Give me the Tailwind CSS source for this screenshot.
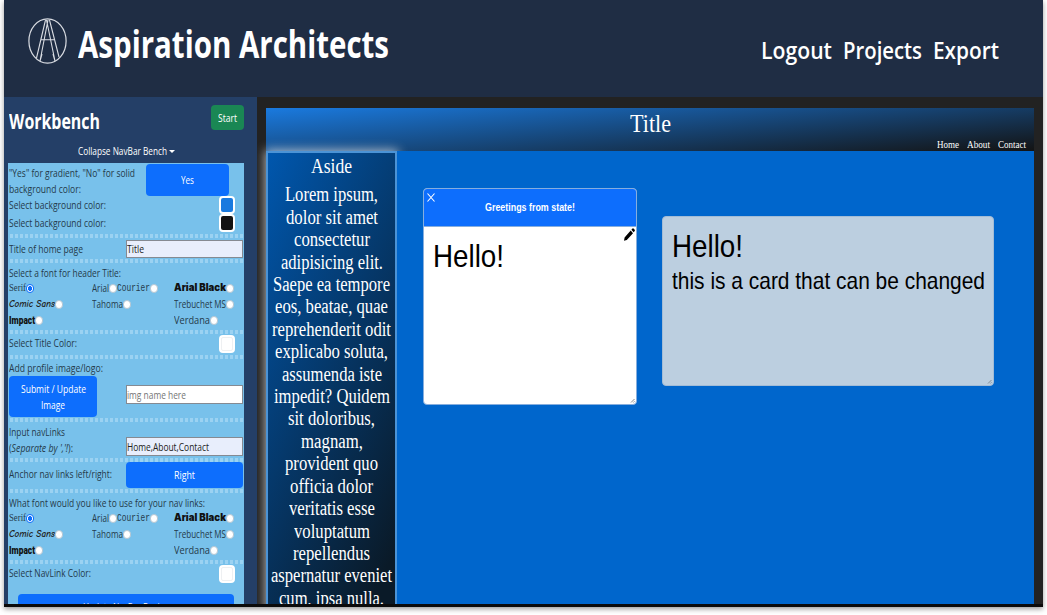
<!DOCTYPE html>
<html lang="en">
<head>
<meta charset="utf-8">
<title>Aspiration Architects</title>
<script src="https://cdn.jsdelivr.net/npm/@tailwindcss/browser@4"></script>
</head>
<body class="bg-white overflow-hidden h-[615px] font-['Open_Sans',sans-serif]">
<div class="ml-[4px] w-[1039px] h-[607px] flex flex-col overflow-hidden shadow-[0_2px_5px_rgba(0,0,0,0.4)] bg-[#0b0b0b]">
  <header class="h-[97px] shrink-0 bg-[#1f2d44] text-white flex items-start pl-[24px] pr-[44px]">
    <svg class="mt-[18px] w-[39px] h-[46px] shrink-0" viewBox="0 0 39 46" fill="none" stroke="#d9dce2" stroke-width="1.2">
      <ellipse cx="19.5" cy="23" rx="18.6" ry="22.2"/>
      <path d="M17.500 2 L8.500 40 M20 2 L12 43 M18.500 2 L27 43 M21.500 2 L31 39 M13 21.700 H26 M12 43 L14 36 M27 43 L25 36" stroke-width="1.100"/>
    </svg>
    <h1 class="ml-[11px] mt-[20px] leading-[48px] text-[37.500px] font-bold"><span data-w="311">Aspiration Architects</span></h1>
    <nav class="ml-auto mt-[34px] flex gap-[11px] leading-[32px] text-[24px] font-semibold">
      <span data-w="71">Logout</span><span data-w="79">Projects</span><span data-w="66">Export</span>
    </nav>
  </header>

  <div class="h-[507px] shrink-0 flex overflow-hidden">
    <aside class="w-[253px] shrink-0 bg-[#243f67] pl-[4px] overflow-hidden text-[10.500px] leading-[16px] text-[#243a4a]">
      <div class="h-[47px] w-[236px] flex justify-between text-white pt-[8px]">
        <h2 class="leading-[33px] text-[21px] font-bold pl-[1px]"><span data-w="91">Workbench</span></h2>
        <button class="w-[33px] h-[25px] rounded-[4px] bg-[#1a8754] flex items-center justify-center"><span data-w="19">Start</span></button>
      </div>
      <div class="h-[19px] flex items-start pt-0 pl-[70px] text-white leading-[15px]">
        <span data-w="89">Collapse NavBar Bench</span>
        <i class="ml-[2px] mt-[6px] border-x-[3px] border-x-transparent border-t-[3px] border-t-white"></i>
      </div>

      <div class="w-[236px] h-[460px] bg-[#78c1eb]">
        <div class="h-[71px] flex pl-[1px]">
          <div class="w-[137px] pt-[2px]">
            <div class="h-[16px]"><span data-w="126">"Yes" for gradient, "No" for solid</span></div>
            <div class="h-[16px]"><span data-w="72">background color:</span></div>
            <div class="h-[18px]"><span data-w="97">Select background color:</span></div>
            <div><span data-w="97">Select background color:</span></div>
          </div>
          <div class="w-[90px] flex flex-col items-end pt-[1px]">
            <button class="w-[83px] h-[32px] mr-[7px] rounded-[4px] bg-[#0d6efd] text-white flex items-center justify-center"><span data-w="13">Yes</span></button>
            <i class="w-[16px] h-[18px] mr-px rounded-[4px] border-2 border-white bg-[#1a7adf]"></i>
            <i class="w-[16px] h-[18px] mr-px rounded-[4px] border-2 border-white bg-[#131313]"></i>
          </div>
        </div>
        <hr class="border-0 h-[4px] bg-[repeating-linear-gradient(90deg,transparent_0_2px,#9bd2f2_2px_5px)]">
        <div class="h-[21px] flex pl-[1px] pt-[2px]">
          <div class="w-[117px] pt-px"><span data-w="74">Title of home page</span></div>
          <div class="w-[117px] h-[18px] bg-[#e8eefc] border border-[#858a92] leading-[16px] text-[#222]"><span data-w="17">Title</span></div>
        </div>
        <hr class="border-0 h-[4px] bg-[repeating-linear-gradient(90deg,transparent_0_2px,#9bd2f2_2px_5px)]">
        <div class="h-[67px] pl-[1px] pt-[2px]">
          <div class="h-[16px]"><span data-w="112">Select a font for header Title:</span></div>
          <div class="grid grid-cols-[83px_82px_70px] auto-rows-[16px] -mt-px">
            <div class="flex items-center"><span data-w="17" class="font-['Liberation_Serif',serif]">Serif</span><i class="w-[8px] h-[9px] rounded-full border border-[#0d6efd] bg-[radial-gradient(#0d6efd_45%,#fff_55%)]"></i></div>
            <div class="flex items-center"><span data-w="17" class="text-[11px]">Arial</span><i class="w-[8px] h-[9px] rounded-full bg-white border border-[#b5c6d2]"></i><span data-w="33" class="font-['Liberation_Mono',monospace] text-[11px]">Courier</span><i class="w-[8px] h-[9px] rounded-full bg-white border border-[#b5c6d2]"></i></div>
            <div class="flex items-center"><span data-w="52" class="font-['Inter',sans-serif] font-black text-[#111]">Arial Black</span><i class="w-[8px] h-[9px] rounded-full bg-white border border-[#b5c6d2]"></i></div>
            <div class="flex items-center"><span data-w="46" class="font-['Comic_Sans_MS','Comic_Neue','Noto_Sans',cursive] italic font-semibold text-[#222]">Comic Sans</span><i class="w-[8px] h-[9px] rounded-full bg-white border border-[#b5c6d2]"></i></div>
            <div class="flex items-center"><span data-w="31">Tahoma</span><i class="w-[8px] h-[9px] rounded-full bg-white border border-[#b5c6d2]"></i></div>
            <div class="flex items-center"><span data-w="52">Trebuchet MS</span><i class="w-[8px] h-[9px] rounded-full bg-white border border-[#b5c6d2]"></i></div>
            <div class="flex items-center"><span data-w="26" class="font-['Roboto',sans-serif] font-black text-[11.500px] text-[#111]">Impact</span><i class="w-[8px] h-[9px] rounded-full bg-white border border-[#b5c6d2]"></i></div>
            <div></div>
            <div class="flex items-center"><span data-w="36">Verdana</span><i class="w-[8px] h-[9px] rounded-full bg-white border border-[#b5c6d2]"></i></div>
          </div>
        </div>
        <hr class="border-0 h-[4px] bg-[repeating-linear-gradient(90deg,transparent_0_2px,#9bd2f2_2px_5px)]">
        <div class="h-[21px] flex justify-between pl-[1px] pr-[9px] pt-[1px]">
          <span data-w="68">Select Title Color:</span>
          <i class="w-[16px] h-[18px] rounded-[4px] border-2 border-white bg-white outline-1 -outline-offset-3 outline-[#eef0f2]"></i>
        </div>
        <hr class="border-0 h-[4px] bg-[repeating-linear-gradient(90deg,transparent_0_2px,#9bd2f2_2px_5px)]">
        <div class="h-[59px] pl-[1px] pt-[1px]">
          <div class="h-[16px]"><span data-w="94">Add profile image/logo:</span></div>
          <div class="flex">
            <button class="w-[88px] h-[41px] rounded-[4px] bg-[#0d6efd] text-white flex flex-col items-center justify-center"><span data-w="65">Submit / Update</span><span data-w="24">Image</span></button>
            <div class="ml-[29px] mt-[9px] w-[117px] h-[19px] bg-white border border-[#858a92] leading-[18px] text-[#757575]"><span data-w="59">img name here</span></div>
          </div>
        </div>
        <hr class="border-0 h-[4px] bg-[repeating-linear-gradient(90deg,transparent_0_2px,#9bd2f2_2px_5px)]">
        <div class="h-[36px] flex pl-[1px] pt-[2px]">
          <div class="w-[117px]">
            <div class="h-[16px]"><span data-w="56">Input navLinks</span></div>
            <div><span data-w="64">(<em>Separate by ','!</em>):</span></div>
          </div>
          <div class="mt-[13px] w-[117px] h-[19px] bg-[#e8eefc] border border-[#858a92] leading-[18px] text-[#222]"><span data-w="82">Home,About,Contact</span></div>
        </div>
        <hr class="border-0 h-[4px] bg-[repeating-linear-gradient(90deg,transparent_0_2px,#9bd2f2_2px_5px)]">
        <div class="h-[27px] flex pl-[1px]">
          <div class="w-[117px] pt-[4px]"><span data-w="103">Anchor nav links left/right:</span></div>
          <button class="w-[117px] h-[26px] rounded-[4px] bg-[#0d6efd] text-white flex items-center justify-center"><span data-w="21">Right</span></button>
        </div>
        <hr class="border-0 h-[4px] bg-[repeating-linear-gradient(90deg,transparent_0_2px,#9bd2f2_2px_5px)]">
        <div class="h-[67px] pl-[1px] pt-[2px]">
          <div class="h-[16px]"><span data-w="196">What font would you like to use for your nav links:</span></div>
          <div class="grid grid-cols-[83px_82px_70px] auto-rows-[16px] -mt-px">
            <div class="flex items-center"><span data-w="17" class="font-['Liberation_Serif',serif]">Serif</span><i class="w-[8px] h-[9px] rounded-full border border-[#0d6efd] bg-[radial-gradient(#0d6efd_45%,#fff_55%)]"></i></div>
            <div class="flex items-center"><span data-w="17" class="text-[11px]">Arial</span><i class="w-[8px] h-[9px] rounded-full bg-white border border-[#b5c6d2]"></i><span data-w="33" class="font-['Liberation_Mono',monospace] text-[11px]">Courier</span><i class="w-[8px] h-[9px] rounded-full bg-white border border-[#b5c6d2]"></i></div>
            <div class="flex items-center"><span data-w="52" class="font-['Inter',sans-serif] font-black text-[#111]">Arial Black</span><i class="w-[8px] h-[9px] rounded-full bg-white border border-[#b5c6d2]"></i></div>
            <div class="flex items-center"><span data-w="46" class="font-['Comic_Sans_MS','Comic_Neue','Noto_Sans',cursive] italic font-semibold text-[#222]">Comic Sans</span><i class="w-[8px] h-[9px] rounded-full bg-white border border-[#b5c6d2]"></i></div>
            <div class="flex items-center"><span data-w="31">Tahoma</span><i class="w-[8px] h-[9px] rounded-full bg-white border border-[#b5c6d2]"></i></div>
            <div class="flex items-center"><span data-w="52">Trebuchet MS</span><i class="w-[8px] h-[9px] rounded-full bg-white border border-[#b5c6d2]"></i></div>
            <div class="flex items-center"><span data-w="26" class="font-['Roboto',sans-serif] font-black text-[11.500px] text-[#111]">Impact</span><i class="w-[8px] h-[9px] rounded-full bg-white border border-[#b5c6d2]"></i></div>
            <div></div>
            <div class="flex items-center"><span data-w="36">Verdana</span><i class="w-[8px] h-[9px] rounded-full bg-white border border-[#b5c6d2]"></i></div>
          </div>
        </div>
        <hr class="border-0 h-[4px] bg-[repeating-linear-gradient(90deg,transparent_0_2px,#9bd2f2_2px_5px)]">
        <div class="h-[30px] flex justify-between pl-[1px] pr-[9px] pt-[1px]">
          <span data-w="82">Select NavLink Color:</span>
          <i class="w-[16px] h-[18px] rounded-[4px] border-2 border-white bg-white outline-1 -outline-offset-3 outline-[#eef0f2]"></i>
        </div>
        <button class="ml-[10px] w-[216px] h-[26px] rounded-[4px] bg-[#0d6efd] text-white flex justify-center pt-[5px]"><span data-w="86">Update NavBar Design</span></button>
      </div>
    </aside>

    <main class="flex-1 bg-[#222] pl-[9px] pt-[11px] overflow-hidden">
      <div class="w-[768px] font-['Liberation_Serif',serif] text-white">
        <div class="h-[43px] bg-[linear-gradient(175deg,#1a7adf,#131313)]">
          <div class="h-[30px] pl-[364px] leading-[31px] text-[25px]"><span data-w="41">Title</span></div>
          <nav class="flex justify-end gap-[8px] pr-[8px] text-[10.500px] leading-[13px]">
            <span data-w="22">Home</span><span data-w="23">About</span><span data-w="28">Contact</span>
          </nav>
        </div>
        <div class="flex h-[460px]">
          <section class="relative w-[131px] shrink-0 border-2 border-[#4b93d6] bg-[linear-gradient(115deg,#0057ae,#0a1a28_92%)] shadow-[0_0_10px_1px_rgba(255,255,255,0.65)] text-[20px] leading-[22.400px] flex flex-col items-center">
            <span data-w="41" class="mt-[2px] mb-[6px]">Aside</span>
            <span data-w="93">Lorem ipsum,</span>
            <span data-w="92">dolor sit amet</span>
            <span data-w="76">consectetur</span>
            <span data-w="102">adipisicing elit.</span>
            <span data-w="117">Saepe ea tempore</span>
            <span data-w="113">eos, beatae, quae</span>
            <span data-w="119">reprehenderit odit</span>
            <span data-w="113">explicabo soluta,</span>
            <span data-w="100">assumenda iste</span>
            <span data-w="116">impedit? Quidem</span>
            <span data-w="87">sit doloribus,</span>
            <span data-w="62">magnam,</span>
            <span data-w="93">provident quo</span>
            <span data-w="83">officia dolor</span>
            <span data-w="86">veritatis esse</span>
            <span data-w="76">voluptatum</span>
            <span data-w="77">repellendus</span>
            <span data-w="121">aspernatur eveniet</span>
            <span data-w="105">cum, ipsa nulla.</span>
          </section>
          <section class="relative flex-1 bg-[#0066cc] flex items-start pl-[26px] font-['Liberation_Sans',sans-serif] text-black">
            <article class="mt-[37px] w-[214px] h-[217px] rounded-[4px] border border-[#86aede] bg-white overflow-hidden flex flex-col">
              <div class="h-[38px] shrink-0 bg-[#0d6efd] border-b border-[#86aede] text-white flex pl-[3px]">
                <svg class="mt-[4px] w-[8px] h-[9px]" viewBox="0 0 8 9" stroke="white" stroke-width="1.100"><path d="M.5 .5 L7.500 8.500 M7.500 .5 L.5 8.500"/></svg>
                <span data-w="90" class="ml-[50px] text-[11px] font-bold leading-[37px]">Greetings from state!</span>
              </div>
              <div class="flex-1 flex justify-between pl-[9px] pr-[1px]">
                <span data-w="71" class="mt-[9px] text-[32px] leading-[40px]">Hello!</span>
                <svg class="mt-[1px] w-[11px] h-[13px]" viewBox="0 0 11 13"><path d="M0 12.700 L.6 9.600 L6.700 2.600 L9 5.200 L2.800 12.100Z M7.400 1.800 L8.500 .5 Q9 0 9.500 .5 L10.700 1.800 Q11.100 2.400 10.700 3 L9.700 4.300Z"/></svg>
              </div>
              <svg class="self-end w-[6px] h-[6px] shrink-0" viewBox="0 0 6 6" stroke="#8a8a8a" fill="none"><path d="M1 4.500 L4.500 1 M3.300 4.500 L4.500 3.300"/></svg>
            </article>
            <article class="ml-[25px] mt-[65px] w-[332px] h-[170px] rounded-[4px] border border-[#a3bcd6] bg-[#bccfe0] overflow-hidden flex flex-col pl-[9px]">
              <span data-w="71" class="mt-[9px] text-[32px] leading-[40px] self-start">Hello!</span>
              <span data-w="313" class="mt-px text-[24px] leading-[28px] self-start">this is a card that can be changed</span>
              <svg class="self-end mt-auto w-[6px] h-[6px] shrink-0" viewBox="0 0 6 6" stroke="#7d8a96" fill="none"><path d="M1 4.500 L4.500 1 M3.300 4.500 L4.500 3.300"/></svg>
            </article>
          </section>
        </div>
      </div>
    </main>
  </div>
</div>
<script>
  // Condense each label horizontally to its set width (px) while keeping it in flow.
  function fitLabels() {
    document.querySelectorAll('[data-w]').forEach(function (el) {
      var s = el.style, w = Number(el.dataset.w);
      s.display = 'inline-block'; s.whiteSpace = 'nowrap'; s.flexShrink = '0';
      s.width = 'max-content'; s.verticalAlign = 'top';
      s.transform = 'none';
      var n = el.getBoundingClientRect().width;
      s.transformOrigin = '0 0';
      s.transform = 'scaleX(' + w / n + ')';
      s.marginRight = (w - n) + 'px';
    });
  }
  fitLabels();
  window.addEventListener('load', fitLabels);
  document.fonts.ready.then(fitLabels);
  new ResizeObserver(fitLabels).observe(document.querySelector('h1'));
  setTimeout(fitLabels, 60);
</script>
</body>
</html>
